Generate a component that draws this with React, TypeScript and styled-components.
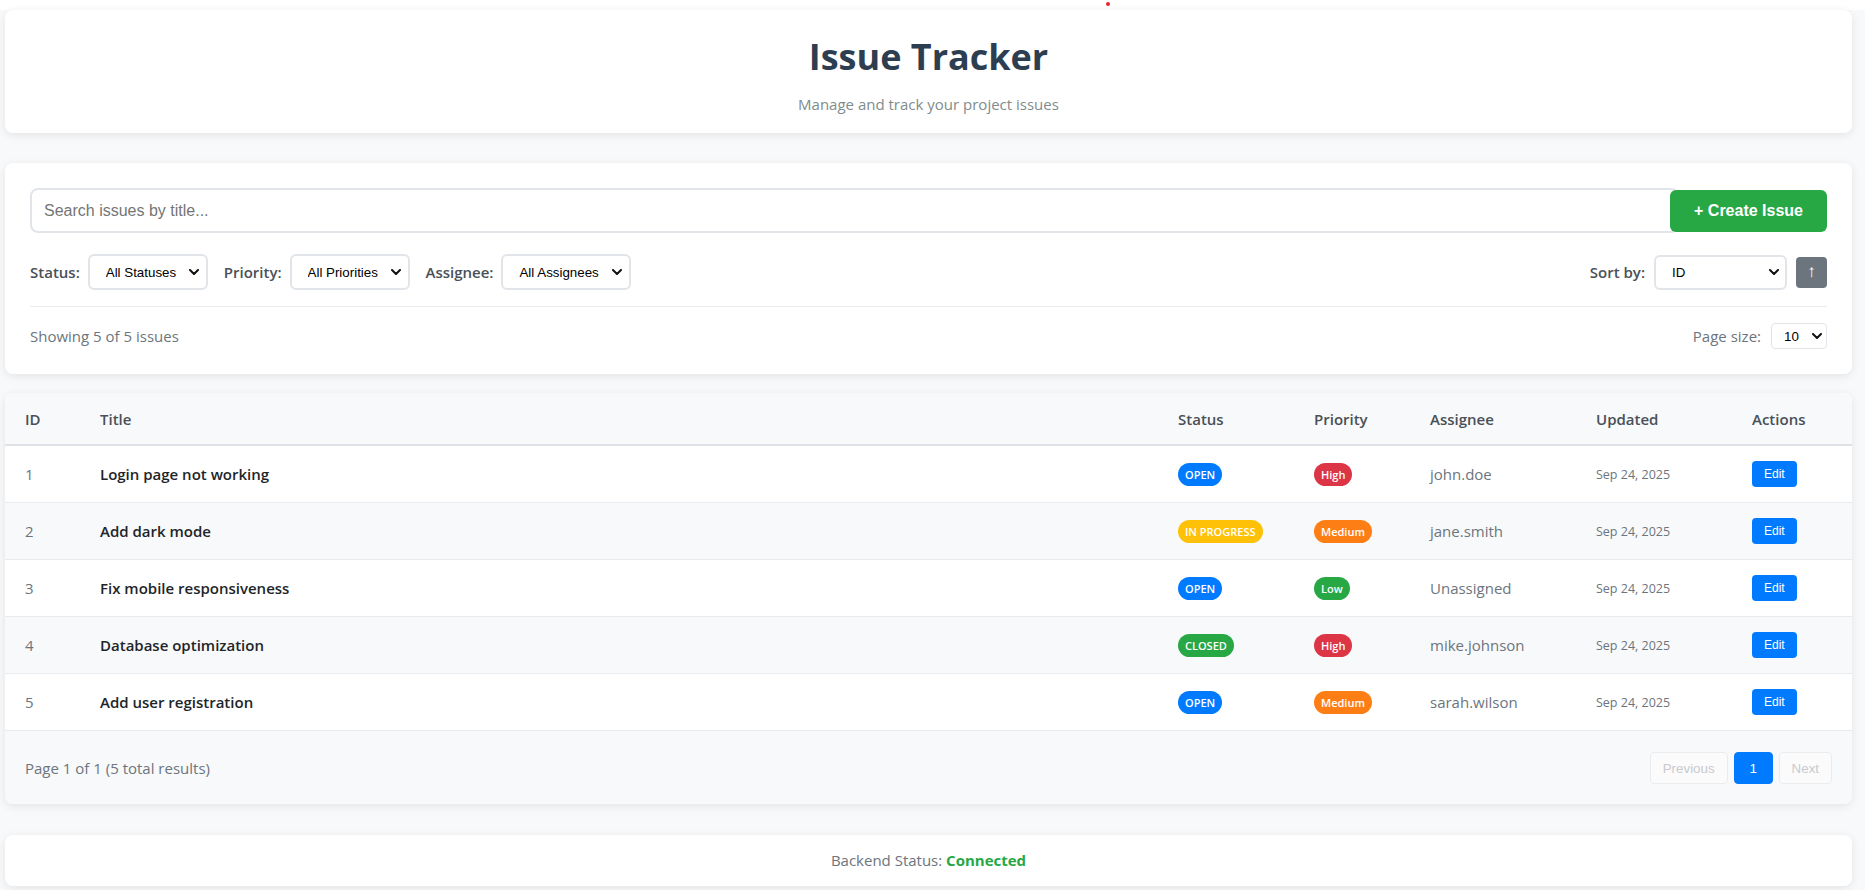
import React from "react";
import styled, { createGlobalStyle } from "styled-components";

const GlobalStyle = createGlobalStyle`
  html, body { margin: 0; padding: 0; background: #ffffff; overflow: hidden; }
  body { font-family: "Open Sans", "Noto Sans", sans-serif; color: #212529; }
  *, *::before, *::after { box-sizing: border-box; }
`;

const TopStrip = styled.div`
  height: 10px;
  background: #ffffff;
  display: flex;
  align-items: flex-start;
  padding: 1px 0 0 1106px;
`;

const RecDot = styled.span`
  width: 4px;
  height: 4px;
  border-radius: 50%;
  background: #e3262d;
  margin-top: 1px;
`;

const Page = styled.div`
  background: #f8f9fa;
  margin-right: 10px;
  padding: 0 13px 4px 5px;
  display: flex;
  flex-direction: column;
`;

const Card = styled.section<{ $mt?: number }>`
  background: #ffffff;
  border-radius: 8px;
  box-shadow: 0 2px 10px rgba(0, 0, 0, 0.09);
  margin-top: ${(p) => p.$mt ?? 0}px;
`;

const HeaderCard = styled(Card)`
  padding: 23px 20px 18px;
  text-align: center;
`;

const Title = styled.h1`
  margin: 0;
  font-size: 36px;
  line-height: 48px;
  font-weight: 700;
  color: #2c3e50;
`;

const Subtitle = styled.p`
  margin: 12px 0 0;
  font-size: 15px;
  line-height: 22px;
  color: #7f8c8d;
`;

const ControlsCard = styled(Card)`
  padding: 25px;
`;

const SearchRow = styled.div`
  display: flex;
  align-items: center;
`;

const SearchInput = styled.input`
  flex: 1;
  height: 45px;
  border: 2px solid #e1e5e9;
  border-radius: 8px;
  padding: 0 12px;
  font-family: "Liberation Sans", Arial, sans-serif;
  font-size: 16px;
  color: #212529;
  background: #fff;
  outline: none;
  &::placeholder { color: #757575; }
`;

const CreateButton = styled.button`
  position: relative;
  margin-left: -9px;
  height: 42px;
  padding: 0 24px;
  border: none;
  border-radius: 6px;
  background: #28a745;
  color: #ffffff;
  font-family: "Liberation Sans", Arial, sans-serif;
  font-size: 16px;
  font-weight: 700;
  cursor: pointer;
`;

const FiltersRow = styled.div`
  display: flex;
  align-items: center;
  justify-content: space-between;
  margin-top: 21px;
  padding-bottom: 16px;
  border-bottom: 1px solid #e9ecef;
`;

const FilterSet = styled.div<{ $gap?: number }>`
  display: flex;
  align-items: center;
  gap: ${(p) => p.$gap ?? 16}px;
`;

const FilterGroup = styled.label<{ $gap?: number }>`
  display: flex;
  align-items: center;
  gap: ${(p) => p.$gap ?? 8}px;
`;

const FilterLabel = styled.span<{ $muted?: boolean }>`
  font-size: 15px;
  font-weight: ${(p) => (p.$muted ? 400 : 600)};
  color: ${(p) => (p.$muted ? "#6c757d" : "#495057")};
  white-space: nowrap;
`;

const SelectWrap = styled.span`
  position: relative;
  display: inline-flex;
`;

const Select = styled.select<{ $w: number; $h?: number; $small?: boolean }>`
  appearance: none;
  -webkit-appearance: none;
  width: ${(p) => p.$w}px;
  height: ${(p) => p.$h ?? 36}px;
  padding: 0 0 0 ${(p) => (p.$small ? 12 : 16)}px;
  border: ${(p) => (p.$small ? 1 : 2)}px solid #e1e5e9;
  border-radius: ${(p) => (p.$small ? 4 : 6)}px;
  background: #ffffff;
  font-family: "Liberation Sans", Arial, sans-serif;
  font-size: 13.33px;
  color: #000000;
  outline: none;
`;

const Chevron = styled.svg<{ $right: number }>`
  position: absolute;
  right: ${(p) => p.$right}px;
  top: 50%;
  margin-top: -3px;
  pointer-events: none;
`;

const SortButton = styled.button`
  width: 31px;
  height: 31px;
  border: none;
  border-radius: 4px;
  background: #6c757d;
  color: #ffffff;
  font-family: "Liberation Sans", Arial, sans-serif;
  font-size: 17px;
  padding: 0;
`;

const SummaryRow = styled.div`
  display: flex;
  align-items: center;
  justify-content: space-between;
  margin-top: 16px;
  height: 26px;
`;

const MutedText = styled.span`
  font-size: 15px;
  color: #6c757d;
`;

const TableCard = styled(Card)`
  overflow: hidden;
`;

const Table = styled.table`
  width: 100%;
  border-collapse: separate;
  border-spacing: 0;
  table-layout: fixed;
`;

const Col = styled.col<{ $w?: number }>`
  width: ${(p) => (p.$w ? `${p.$w}px` : "auto")};
`;

const Th = styled.th`
  height: 53px;
  padding: 0 20px;
  text-align: left;
  font-size: 15px;
  font-weight: 600;
  color: #495057;
  background: #f8f9fa;
  border-bottom: 2px solid #dee2e6;
`;

const Tr = styled.tr<{ $alt?: boolean }>`
  background: ${(p) => (p.$alt ? "#f8f9fa" : "#ffffff")};
`;

const Td = styled.td<{ $tone?: "id" | "title" | "muted" | "date" }>`
  height: 57px;
  padding: 0 20px;
  border-bottom: 1px solid #e9ecef;
  font-size: ${(p) => (p.$tone === "date" ? "12.5px" : "15px")};
  font-weight: ${(p) => (p.$tone === "title" ? 600 : 400)};
  color: ${(p) => (p.$tone === "title" ? "#212529" : "#6c757d")};
  white-space: nowrap;
`;

const Badge = styled.span<{ $bg: string }>`
  display: inline-block;
  height: 23px;
  line-height: 23px;
  padding: 0 7px;
  border-radius: 12px;
  background: ${(p) => p.$bg};
  color: #ffffff;
  font-size: 11px;
  font-weight: 600;
`;

const EditButton = styled.button`
  height: 26px;
  padding: 0 12px;
  border: none;
  border-radius: 4px;
  background: #007bff;
  color: #ffffff;
  font-family: "Liberation Sans", Arial, sans-serif;
  font-size: 12px;
`;

const TableFooter = styled.div`
  display: flex;
  align-items: center;
  justify-content: space-between;
  padding: 21px 20px 20px;
  background: #f8f9fa;
`;

const Pager = styled.div`
  display: flex;
  gap: 6px;
`;

const PageButton = styled.button<{ $active?: boolean }>`
  height: 32px;
  min-width: 39px;
  padding: 0 12px;
  border-radius: 4px;
  border: 1px solid ${(p) => (p.$active ? "#007bff" : "#e9ecef")};
  background: ${(p) => (p.$active ? "#007bff" : "#fbfbfc")};
  color: ${(p) => (p.$active ? "#ffffff" : "#c8cacd")};
  font-family: "Liberation Sans", Arial, sans-serif;
  font-size: 13.33px;
`;

const StatusCard = styled(Card)`
  padding: 15px 20px;
  text-align: center;
  font-size: 15px;
  line-height: 21px;
  color: #6c757d;
`;

const Connected = styled.strong`
  color: #28a745;
  font-weight: 700;
`;

const ChevronIcon = ({ right }: { right: number }) => (
  <Chevron $right={right} width="10" height="6" viewBox="0 0 10 6">
    <polyline points="1,1 5,5 9,1" fill="none" stroke="#111" strokeWidth="2" strokeLinecap="round" strokeLinejoin="round" />
  </Chevron>
);

type Issue = {
  id: number;
  title: string;
  status: "OPEN" | "IN PROGRESS" | "CLOSED";
  priority: "High" | "Medium" | "Low";
  assignee: string;
  updated: string;
};

const issues: Issue[] = [
  { id: 1, title: "Login page not working", status: "OPEN", priority: "High", assignee: "john.doe", updated: "Sep 24, 2025" },
  { id: 2, title: "Add dark mode", status: "IN PROGRESS", priority: "Medium", assignee: "jane.smith", updated: "Sep 24, 2025" },
  { id: 3, title: "Fix mobile responsiveness", status: "OPEN", priority: "Low", assignee: "Unassigned", updated: "Sep 24, 2025" },
  { id: 4, title: "Database optimization", status: "CLOSED", priority: "High", assignee: "mike.johnson", updated: "Sep 24, 2025" },
  { id: 5, title: "Add user registration", status: "OPEN", priority: "Medium", assignee: "sarah.wilson", updated: "Sep 24, 2025" },
];

const statusColor: Record<Issue["status"], string> = {
  OPEN: "#007bff",
  "IN PROGRESS": "#ffc107",
  CLOSED: "#28a745",
};

const priorityColor: Record<Issue["priority"], string> = {
  High: "#dc3545",
  Medium: "#fd7e14",
  Low: "#28a745",
};

export default function App() {
  return (
    <>
      <GlobalStyle />
      <TopStrip>
        <RecDot />
      </TopStrip>
      <Page>
        <HeaderCard>
          <Title>Issue Tracker</Title>
          <Subtitle>Manage and track your project issues</Subtitle>
        </HeaderCard>

        <ControlsCard $mt={30}>
          <SearchRow>
            <SearchInput placeholder="Search issues by title..." />
            <CreateButton>+ Create Issue</CreateButton>
          </SearchRow>
          <FiltersRow>
            <FilterSet>
              <FilterGroup>
                <FilterLabel>Status:</FilterLabel>
                <SelectWrap>
                  <Select $w={120} defaultValue="all">
                    <option value="all">All Statuses</option>
                  </Select>
                  <ChevronIcon right={9} />
                </SelectWrap>
              </FilterGroup>
              <FilterGroup>
                <FilterLabel>Priority:</FilterLabel>
                <SelectWrap>
                  <Select $w={120} defaultValue="all">
                    <option value="all">All Priorities</option>
                  </Select>
                  <ChevronIcon right={9} />
                </SelectWrap>
              </FilterGroup>
              <FilterGroup>
                <FilterLabel>Assignee:</FilterLabel>
                <SelectWrap>
                  <Select $w={130} defaultValue="all">
                    <option value="all">All Assignees</option>
                  </Select>
                  <ChevronIcon right={9} />
                </SelectWrap>
              </FilterGroup>
            </FilterSet>
            <FilterSet $gap={9}>
              <FilterGroup $gap={9}>
                <FilterLabel>Sort by:</FilterLabel>
                <SelectWrap>
                  <Select $w={133} $h={35} defaultValue="id">
                    <option value="id">ID</option>
                  </Select>
                  <ChevronIcon right={8} />
                </SelectWrap>
              </FilterGroup>
              <SortButton>↑</SortButton>
            </FilterSet>
          </FiltersRow>
          <SummaryRow>
            <MutedText>Showing 5 of 5 issues</MutedText>
            <FilterGroup $gap={10}>
              <FilterLabel $muted>Page size:</FilterLabel>
              <SelectWrap>
                <Select $w={56} $h={26} $small defaultValue="10">
                  <option value="10">10</option>
                </Select>
                <ChevronIcon right={5} />
              </SelectWrap>
            </FilterGroup>
          </SummaryRow>
        </ControlsCard>

        <TableCard $mt={19}>
          <Table>
            <colgroup>
              <Col $w={75} />
              <Col />
              <Col $w={136} />
              <Col $w={116} />
              <Col $w={166} />
              <Col $w={156} />
              <Col $w={120} />
            </colgroup>
            <thead>
              <tr>
                <Th>ID</Th>
                <Th>Title</Th>
                <Th>Status</Th>
                <Th>Priority</Th>
                <Th>Assignee</Th>
                <Th>Updated</Th>
                <Th>Actions</Th>
              </tr>
            </thead>
            <tbody>
              {issues.map((issue, i) => (
                <Tr key={issue.id} $alt={i % 2 === 1}>
                  <Td $tone="id">{issue.id}</Td>
                  <Td $tone="title">{issue.title}</Td>
                  <Td>
                    <Badge $bg={statusColor[issue.status]}>{issue.status}</Badge>
                  </Td>
                  <Td>
                    <Badge $bg={priorityColor[issue.priority]}>{issue.priority}</Badge>
                  </Td>
                  <Td $tone="muted">{issue.assignee}</Td>
                  <Td $tone="date">{issue.updated}</Td>
                  <Td>
                    <EditButton>Edit</EditButton>
                  </Td>
                </Tr>
              ))}
            </tbody>
          </Table>
          <TableFooter>
            <MutedText>Page 1 of 1 (5 total results)</MutedText>
            <Pager>
              <PageButton disabled>Previous</PageButton>
              <PageButton $active>1</PageButton>
              <PageButton disabled>Next</PageButton>
            </Pager>
          </TableFooter>
        </TableCard>

        <StatusCard $mt={31}>
          Backend Status: <Connected>Connected</Connected>
        </StatusCard>
      </Page>
    </>
  );
}
